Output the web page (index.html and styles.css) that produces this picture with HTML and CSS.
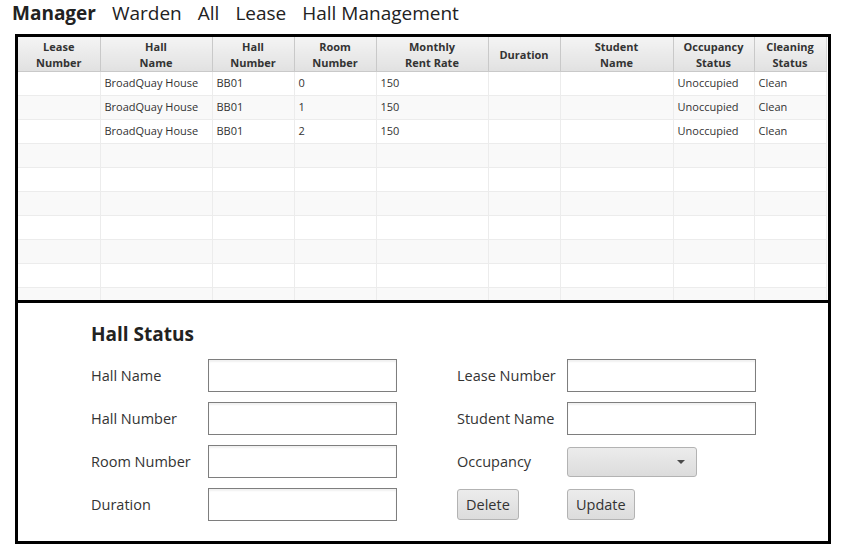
FILE: index.html
```html
<!DOCTYPE html>
<html>
<head>
<meta charset="utf-8">
<link rel="stylesheet" href="styles.css">
</head>
<body>
<nav class="tabs">
  <span class="tab active">Manager</span>
  <span class="tab">Warden</span>
  <span class="tab">All</span>
  <span class="tab">Lease</span>
  <span class="tab">Hall Management</span>
</nav>
<div class="frame">
  <div class="table-wrap">
    <table class="grid">
      <colgroup>
        <col class="c82"><col class="c112"><col class="c82"><col class="c82"><col class="c112"><col class="c72"><col class="c113"><col class="c81"><col class="c72">
      </colgroup>
      <thead>
        <tr>
          <th>Lease<br>Number</th>
          <th>Hall<br>Name</th>
          <th>Hall<br>Number</th>
          <th>Room<br>Number</th>
          <th>Monthly<br>Rent Rate</th>
          <th>Duration</th>
          <th>Student<br>Name</th>
          <th>Occupancy<br>Status</th>
          <th>Cleaning<br>Status</th>
        </tr>
      </thead>
      <tbody>
        <tr><td></td><td>BroadQuay House</td><td>BB01</td><td>0</td><td>150</td><td></td><td></td><td>Unoccupied</td><td>Clean</td></tr>
        <tr><td></td><td>BroadQuay House</td><td>BB01</td><td>1</td><td>150</td><td></td><td></td><td>Unoccupied</td><td>Clean</td></tr>
        <tr><td></td><td>BroadQuay House</td><td>BB01</td><td>2</td><td>150</td><td></td><td></td><td>Unoccupied</td><td>Clean</td></tr>
        <tr><td></td><td></td><td></td><td></td><td></td><td></td><td></td><td></td><td></td></tr>
        <tr><td></td><td></td><td></td><td></td><td></td><td></td><td></td><td></td><td></td></tr>
        <tr><td></td><td></td><td></td><td></td><td></td><td></td><td></td><td></td><td></td></tr>
        <tr><td></td><td></td><td></td><td></td><td></td><td></td><td></td><td></td><td></td></tr>
        <tr><td></td><td></td><td></td><td></td><td></td><td></td><td></td><td></td><td></td></tr>
        <tr><td></td><td></td><td></td><td></td><td></td><td></td><td></td><td></td><td></td></tr>
        <tr><td></td><td></td><td></td><td></td><td></td><td></td><td></td><td></td><td></td></tr>
        <tr><td></td><td></td><td></td><td></td><td></td><td></td><td></td><td></td><td></td></tr>
      </tbody>
    </table>
  </div>
  <div class="form">
    <h2 class="form-title">Hall Status</h2>
    <div class="form-grid">
      <label class="lbl">Hall Name</label>
      <div class="field"><input class="input" type="text"></div>
      <label class="lbl">Lease Number</label>
      <div class="field"><input class="input" type="text"></div>

      <label class="lbl">Hall Number</label>
      <div class="field"><input class="input" type="text"></div>
      <label class="lbl">Student Name</label>
      <div class="field"><input class="input" type="text"></div>

      <label class="lbl">Room Number</label>
      <div class="field"><input class="input" type="text"></div>
      <label class="lbl">Occupancy</label>
      <div class="field"><div class="combo"><span class="arrow"></span></div></div>

      <label class="lbl">Duration</label>
      <div class="field"><input class="input" type="text"></div>
      <div class="field"><button class="btn">Delete</button></div>
      <div class="field"><button class="btn">Update</button></div>
    </div>
  </div>
</div>
</body>
</html>
```
FILE: styles.css
```css
* { box-sizing: border-box; }
html, body { margin: 0; padding: 0; background: #fff; }
body {
  font-family: "Open Sans", "Noto Sans", sans-serif;
  color: #333;
  width: 850px;
  height: 548px;
  overflow: hidden;
}
.tabs {
  display: flex;
  gap: 16px;
  padding-left: 12px;
  height: 34px;
  align-items: flex-start;
}
.tab {
  font-size: 19px;
  line-height: 26px;
  color: #222;
}
.tab.active { font-weight: 700; }

.frame {
  margin-left: 15px;
  width: 816px;
  border: 3px solid #000;
}
.table-wrap {
  height: 266px;
  overflow: hidden;
  border-bottom: 3px solid #000;
}
.grid {
  table-layout: fixed;
  border-collapse: collapse;
  width: 808px;
  font-size: 11px;
}
.c82 { width: 82px; }
.c112 { width: 112px; }
.c113 { width: 113px; }
.c72 { width: 72px; }
.c81 { width: 81px; }
.grid th {
  height: 33px;
  padding: 2px 2px 0 2px;
  font-weight: 700;
  font-size: 11px;
  line-height: 16px;
  color: #333;
  text-align: center;
  background: linear-gradient(#f4f4f4, #e1e1e1);
  border-right: 1px solid #c9c9c9;
  border-bottom: 1px solid #c9c9c9;
}
.grid th:last-child { border-right: 1px solid #d6d6d6; }
.grid td {
  height: 24px;
  padding: 0 4px 2px 4px;
  font-size: 11px;
  color: #333;
  border-right: 1px solid #ececec;
  border-bottom: 1px solid #ececec;
  white-space: nowrap;
  overflow: hidden;
}
.grid tbody tr:nth-child(even) td { background: #f9f9f9; }

.form {
  height: 238px;
  padding: 18px 0 0 73px;
}
.form-title {
  margin: 0 0 12px 0;
  font-size: 19px;
  line-height: 26px;
  font-weight: 700;
  color: #222;
}
.form-grid {
  display: grid;
  grid-template-columns: 117px 189px 170px 189px;
  row-gap: 10px;
}
.form-grid > :nth-child(4n+3) { margin-left: 60px; }
.lbl {
  height: 33px;
  display: flex;
  align-items: center;
  font-size: 14.5px;
  color: #333;
}
.field {
  height: 33px;
  display: flex;
  align-items: center;
}
.input {
  width: 189px;
  height: 33px;
  border: 1px solid #7e7e7e;
  border-radius: 0;
  background: #fff;
  box-shadow: inset 0 2px 2px rgba(0,0,0,0.06);
  margin: 0;
  padding: 0 6px;
  font: inherit;
}
.combo {
  width: 130px;
  height: 30px;
  border: 1px solid #b3b3b3;
  border-radius: 3px;
  background: linear-gradient(#ececec, #dcdcdc);
  display: flex;
  align-items: center;
  justify-content: flex-end;
  padding-right: 11px;
}
.arrow {
  width: 0; height: 0;
  border-left: 4px solid transparent;
  border-right: 4px solid transparent;
  border-top: 4px solid #4a4a4a;
}
.btn {
  height: 31px;
  padding: 0 8px;
  font-family: inherit;
  font-size: 14.5px;
  color: #333;
  border: 1px solid #b3b3b3;
  border-radius: 3px;
  background: linear-gradient(#ececec, #dcdcdc);
  margin: 0;
}
```
